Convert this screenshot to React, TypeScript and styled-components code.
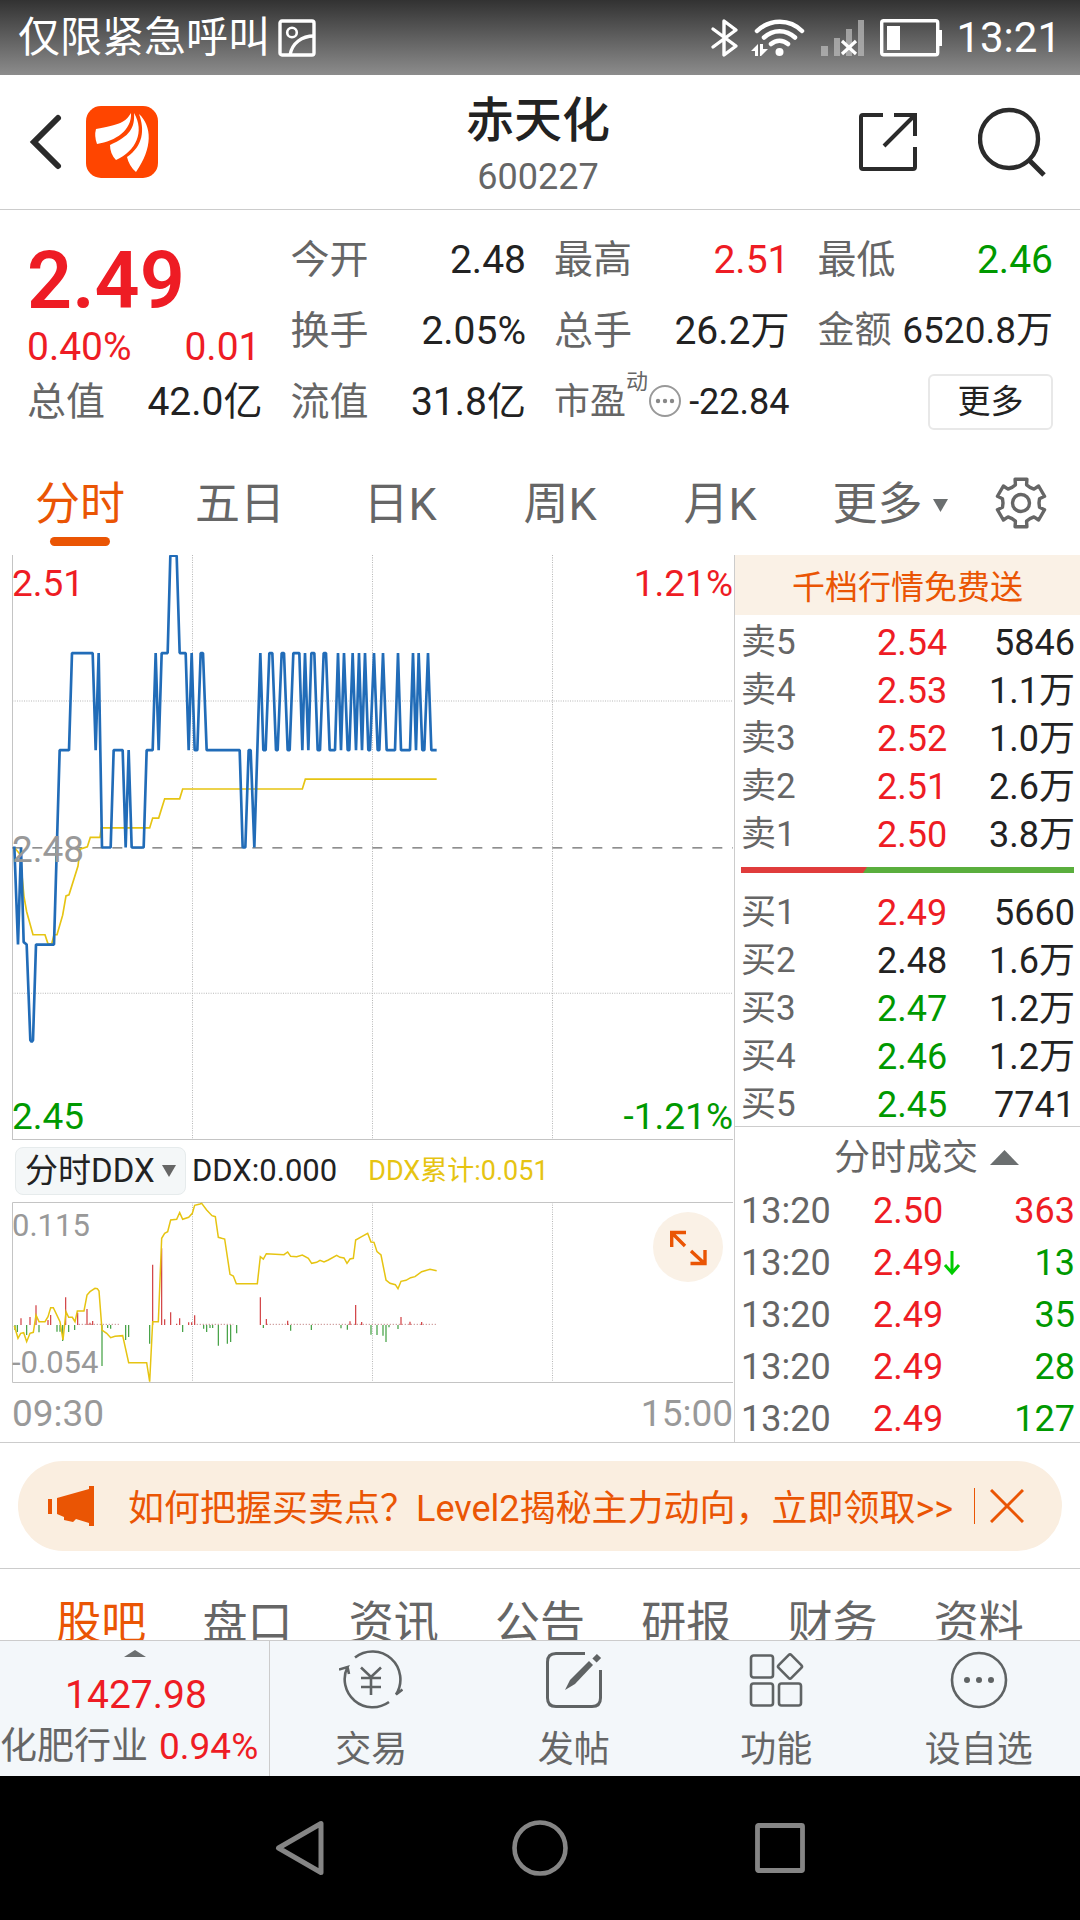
import React from 'react';
import styled, { createGlobalStyle, css } from 'styled-components';

const color = {
  ink: '#222222',
  label: '#666666',
  muted: '#999999',
  red: '#ee1c24',
  green: '#009900',
  orange: '#ea5504',
  yellow: '#e6c412',
  line: '#cccccc',
  cream: '#faf1e6',
  bar: '#f3f7fa',
};

type Tone = 'red' | 'green' | 'ink' | 'label' | 'muted';

const GlobalStyle = createGlobalStyle`
  *, *::before, *::after { box-sizing: border-box; }
  body {
    margin: 0;
    background: #ffffff;
    color: ${color.ink};
    font-family: Roboto, 'Noto Sans CJK SC', sans-serif;
  }
`;

const bareButton = css`
  margin: 0;
  padding: 0;
  border: 0;
  background: none;
  color: inherit;
  font: inherit;
  cursor: pointer;
`;

const Screen = styled.div`
  display: flex;
  flex-direction: column;
  height: 100vh;
  overflow: hidden;
`;

/* ---------- status bar ---------- */

const StatusBar = styled.div`
  display: flex;
  flex: none;
  align-items: center;
  justify-content: space-between;
  height: 75px;
  padding: 0 19px 0 18px;
  background: linear-gradient(#323232, #8c8c8c);
  color: #ffffff;
  font-size: 42px;
  line-height: 60px;
`;

const StatusGroup = styled.div<{ $gap: number }>`
  display: flex;
  align-items: center;
  gap: ${(p) => p.$gap}px;
`;

/* ---------- header ---------- */

const Header = styled.header`
  display: grid;
  flex: none;
  grid-template-columns: 1fr auto 1fr;
  align-items: center;
  height: 135px;
  padding: 0 32px 0 28px;
  border-bottom: 1px solid ${color.line};
`;

const HeaderSide = styled.div<{ $end?: boolean }>`
  display: flex;
  align-items: center;
  justify-content: ${(p) => (p.$end ? 'flex-end' : 'flex-start')};
  gap: ${(p) => (p.$end ? 60 : 22)}px;
`;

const IconButton = styled.button`
  ${bareButton}
  display: flex;
  align-items: center;
  justify-content: center;
`;

const HeaderTitle = styled.div`
  display: flex;
  flex-direction: column;
  align-items: center;
  padding-top: 5px;
`;

const StockName = styled.h1`
  margin: 0;
  font-size: 48px;
  font-weight: 500;
  line-height: 64px;
`;

const StockCode = styled.span`
  color: ${color.label};
  font-size: 36px;
  line-height: 48px;
`;

/* ---------- quote ---------- */

const Content = styled.main`
  flex: 1;
  min-height: 0;
  overflow: hidden;
`;

const QuoteGrid = styled.section`
  display: grid;
  grid-template-columns: repeat(4, 1fr);
  grid-auto-rows: 71px;
  column-gap: 28px;
  padding: 14px 27px 38px;
`;

const PriceBlock = styled.div`
  grid-row: span 2;
  padding-top: 12px;
  color: ${color.red};
`;

const BigPrice = styled.div`
  font-size: 79px;
  font-weight: 600;
  line-height: 90px;
`;

const PriceChange = styled.div`
  display: flex;
  justify-content: space-between;
  padding-right: 2px;
  font-size: 39px;
  line-height: 42px;
`;

const Stat = styled.div<{ $size?: number }>`
  display: flex;
  align-items: center;
  justify-content: space-between;
  font-size: ${(p) => p.$size ?? 39}px;
  line-height: 48px;
  white-space: nowrap;
`;

const StatLabel = styled.span`
  display: flex;
  align-items: center;
  color: ${color.label};
`;

const Value = styled.span<{ $tone?: Tone }>`
  color: ${(p) => color[p.$tone ?? 'ink']};
`;

const Superscript = styled.span`
  align-self: flex-start;
  margin-top: -8px;
  font-size: 22px;
  line-height: 24px;
`;

const MoreButton = styled.button`
  ${bareButton}
  align-self: center;
  justify-self: end;
  width: 125px;
  height: 56px;
  border: 2px solid #e8e8e8;
  border-radius: 6px;
  font-size: 33px;
  line-height: 48px;
`;

/* ---------- period tabs ---------- */

const PeriodTabs = styled.nav`
  display: grid;
  grid-template-columns: repeat(5, 160fr) 180fr 100fr;
  height: 80px;
`;

const PeriodTab = styled.button<{ $active?: boolean }>`
  ${bareButton}
  display: flex;
  flex-direction: column;
  align-items: center;
  color: ${(p) => (p.$active ? color.orange : color.label)};
  font-size: 45px;
  line-height: 60px;

  &::after {
    width: 60px;
    height: 9px;
    margin-top: 2px;
    border-radius: 5px;
    background: ${(p) => (p.$active ? color.orange : 'transparent')};
    content: '';
  }
`;

const MoreTab = styled.button`
  ${bareButton}
  display: flex;
  align-items: center;
  justify-content: center;
  gap: 10px;
  height: 60px;
  color: ${color.label};
  font-size: 45px;
  line-height: 60px;
`;

const SettingsTab = styled(IconButton)`
  height: 56px;
  padding-right: 18px;
`;

/* ---------- charts ---------- */

const Market = styled.section`
  display: grid;
  grid-template-columns: 735fr 345fr;
  border-bottom: 1px solid ${color.line};
`;

const ChartColumn = styled.div`
  padding-left: 12px;
  border-right: 1px solid ${color.line};
`;

const ChartFrame = styled.div`
  position: relative;
`;

const ChartSvg = styled.svg<{ $ratio: string }>`
  display: block;
  width: 100%;
  aspect-ratio: ${(p) => p.$ratio};
`;

const ChartLabel = styled.span<{
  $tone: Tone;
  $top?: string;
  $bottom?: string;
  $right?: boolean;
  $small?: boolean;
}>`
  position: absolute;
  top: ${(p) => p.$top ?? 'auto'};
  bottom: ${(p) => p.$bottom ?? 'auto'};
  ${(p) => (p.$right ? 'right: 1px;' : 'left: 0;')}
  color: ${(p) => color[p.$tone]};
  font-size: ${(p) => (p.$small ? 31 : 37)}px;
  line-height: 40px;
`;

const IndicatorRow = styled.div`
  display: flex;
  align-items: center;
  height: 62px;
  padding-left: 3px;
  font-size: 31px;
  line-height: 48px;
`;

const SelectBox = styled.div`
  position: relative;
  display: flex;
  align-items: center;
`;

const IndicatorSelect = styled.select`
  width: 171px;
  height: 48px;
  padding: 0 0 0 9px;
  border: 1px solid #e6ebec;
  border-radius: 8px;
  background: #f4f7f8;
  color: ${color.ink};
  font: inherit;
  font-size: 33px;
  line-height: 46px;
  appearance: none;
`;

const SelectArrow = styled.svg`
  position: absolute;
  right: 10px;
  pointer-events: none;
`;

const DdxValue = styled.span`
  margin-left: 6px;
`;

const DdxTotal = styled.span`
  margin-left: 31px;
  color: ${color.yellow};
  font-size: 27px;
`;

const ExpandButton = styled.button`
  ${bareButton}
  position: absolute;
  top: 10px;
  right: 11px;
  width: 70px;
  height: 70px;
  border-radius: 50%;
  background: ${color.cream};
`;

const TimeAxis = styled.div`
  display: flex;
  justify-content: space-between;
  align-items: center;
  height: 59px;
  padding: 3px 1px 0 0;
  color: ${color.muted};
  font-size: 37px;
  line-height: 40px;
`;

/* ---------- order book ---------- */

const PromoLink = styled.a`
  display: block;
  height: 60px;
  background: ${color.cream};
  color: ${color.orange};
  font-size: 33px;
  line-height: 66px;
  text-align: center;
  text-decoration: none;
`;

const DataTable = styled.table<{ $top?: number }>`
  display: block;
  padding: ${(p) => p.$top ?? 0}px 5px 0 6px;
  font-size: 36px;
`;

const Rows = styled.tbody`
  display: flex;
  flex-direction: column;
  gap: 6px;
`;

const Row = styled.tr<{ $trade?: boolean }>`
  display: grid;
  grid-template-columns: ${(p) => (p.$trade ? 132 : 136)}px 1fr auto;
  align-items: center;
  height: ${(p) => (p.$trade ? 46 : 42)}px;
  line-height: 42px;
`;

const Cell = styled.td<{ $tone?: Tone }>`
  display: flex;
  align-items: center;
  padding: 0;
  color: ${(p) => color[p.$tone ?? 'ink']};
`;

const RowHead = styled.th`
  padding: 0;
  color: ${color.label};
  font-size: 35px;
  font-weight: 400;
  text-align: left;
`;

const TimeHead = styled(RowHead)`
  font-size: 36px;
`;

const Balance = styled.svg`
  display: block;
  width: calc(100% - 12px);
  height: 6px;
  margin: 11px 6px 19px;
`;

const TradesToggle = styled.button`
  ${bareButton}
  display: flex;
  align-items: center;
  justify-content: center;
  gap: 12px;
  width: 100%;
  height: 62px;
  padding-left: 38px;
  border-top: 1px solid ${color.line};
  color: ${color.label};
  font-size: 36px;
  line-height: 48px;
`;

/* ---------- banner and lower tabs ---------- */

const BannerWrap = styled.section`
  padding: 18px 18px 17px;
  border-bottom: 1px solid ${color.line};
`;

const Banner = styled.div`
  display: flex;
  align-items: center;
  height: 90px;
  padding: 0 38px 0 30px;
  border-radius: 45px;
  background: #faeee0;
  color: ${color.orange};
`;

const BannerLink = styled.a`
  flex: 1;
  margin-left: 34px;
  padding-top: 6px;
  color: inherit;
  font-size: 36px;
  line-height: 48px;
  text-decoration: none;
  white-space: nowrap;
`;

const BannerClose = styled(IconButton)`
  height: 36px;
  padding-left: 15px;
  border-left: 1px solid ${color.orange};
`;

const InfoTabs = styled.nav`
  display: grid;
  grid-template-columns: repeat(7, 1fr);
  padding: 22px 28px;
`;

const InfoTab = styled.button<{ $active?: boolean }>`
  ${bareButton}
  color: ${(p) => (p.$active ? color.orange : color.label)};
  font-size: 45px;
  line-height: 66px;
`;

/* ---------- bottom bar ---------- */

const BottomBar = styled.footer`
  display: grid;
  flex: none;
  grid-template-columns: 1fr 3fr;
  height: 136px;
  border-top: 1px solid ${color.line};
  background: ${color.bar};
`;

const IndexCard = styled.button`
  ${bareButton}
  display: flex;
  flex-direction: column;
  align-items: center;
  padding-top: 9px;
  border-right: 1px solid ${color.line};
  white-space: nowrap;
`;

const IndexValue = styled.span`
  margin-top: 10px;
  padding-left: 3px;
  color: ${color.red};
  font-size: 39px;
  line-height: 56px;
`;

const IndexName = styled.span`
  display: flex;
  align-self: flex-start;
  gap: 11px;
  color: ${color.label};
  font-size: 37px;
  line-height: 48px;
`;

const Actions = styled.div`
  display: grid;
  grid-template-columns: repeat(4, 1fr);
`;

const Action = styled.button`
  ${bareButton}
  display: flex;
  flex-direction: column;
  align-items: center;
  gap: 16px;
  padding-top: 9px;
  color: ${color.label};
  font-size: 36px;
  line-height: 48px;
`;

const SystemNav = styled.nav`
  display: flex;
  flex: none;
  align-items: center;
  justify-content: center;
  gap: 180px;
  height: 144px;
  background: #000000;
`;

const SystemButton = styled(IconButton)`
  width: 60px;
  height: 60px;
`;

/* ---------- icons ---------- */

const PictureIcon = () => (
  <svg width="38" height="38" viewBox="0 0 38 38" fill="none" stroke="#fff" strokeWidth="3.4">
    <rect x="2" y="2" width="34" height="34" rx="2" />
    <circle cx="14" cy="13.500" r="4.800" strokeWidth="2.600" />
    <path d="M12 36C14 24 24 17 36 17" />
  </svg>
);

const BluetoothIcon = () => (
  <svg width="30" height="40" viewBox="0 0 30 40" fill="none" stroke="#fff" strokeWidth="3.4" strokeLinejoin="round" strokeLinecap="round">
    <path d="M3 11L26 28L14 37V3L26 12L3 29" />
  </svg>
);

const WifiIcon = () => (
  <svg width="56" height="40" viewBox="0 0 56 40" fill="none" stroke="#fff" strokeWidth="4.500" strokeLinecap="round">
    <path d="M7 13C20 .5 40 .5 52 13M14 19.500C23 11 36 11 45 19.500M21 26C26 21.500 33 21.500 38 26" />
    <circle cx="29.500" cy="34" r="4" fill="#fff" stroke="none" />
    <path d="M1 33L8 26V38H5V33ZM10 26H13V31H18L11 38H10Z" fill="#fff" stroke="none" />
  </svg>
);

const SignalIcon = () => (
  <svg width="46" height="40" viewBox="0 0 46 40">
    <g fill="#b9b9b9" opacity=".75">
      <rect x="1" y="28" width="7" height="10" />
      <rect x="14" y="20" width="6" height="18" />
      <rect x="26" y="11" width="6" height="27" />
      <rect x="38" y="2" width="6" height="36" />
    </g>
    <path d="M22 23L36 36M36 23L22 36" stroke="#fff" strokeWidth="3.200" />
  </svg>
);

const BatteryIcon = () => (
  <svg width="62" height="38" viewBox="0 0 62 38">
    <rect x="1.700" y="1.700" width="56" height="34" rx="2" fill="none" stroke="#fff" strokeWidth="3.400" />
    <rect x="7" y="7" width="13" height="24" fill="#fff" />
    <rect x="58" y="11" width="4" height="16" fill="#fff" />
  </svg>
);

const BackIcon = () => (
  <svg width="36" height="60" viewBox="0 0 36 60" fill="none" stroke="#2b2b2b" strokeWidth="6" strokeLinecap="round">
    <path d="M30 6L6 30L30 54" />
  </svg>
);

const Logo = () => (
  <svg width="72" height="72" viewBox="0 0 72 72">
    <rect width="72" height="72" rx="15" fill="#ff4500" />
    <g fill="#fff">
      <path d="M45 7C40 16 33 19 10 23Q8 30 11 38C30 35 46 24 45 7Z" />
      <path d="M48 7C49 22 44 30 24 39Q24 48 30 54C50 45 59 26 48 7Z" />
      <path d="M53 8C66 20 67 42 50 66Q43 60 41 51C57 40 59 24 53 8Z" />
    </g>
  </svg>
);

const ShareIcon = () => (
  <svg width="60" height="60" viewBox="0 0 60 60" fill="none" stroke="#2b2b2b" strokeWidth="4">
    <path d="M25 3H5Q3 3 3 5V55Q3 57 5 57H55Q57 57 57 55V35" />
    <path d="M36 3H57V24M57 3L26 34" />
  </svg>
);

const SearchIcon = () => (
  <svg width="70" height="70" viewBox="0 0 70 70" fill="none" stroke="#2b2b2b" strokeWidth="4.400">
    <circle cx="31" cy="32" r="29" />
    <path d="M51 53L66 68" strokeWidth="5" />
  </svg>
);

const InfoIcon = () => (
  <svg width="34" height="34" viewBox="0 0 34 34">
    <circle cx="17" cy="16" r="15" fill="none" stroke="#999" strokeWidth="2" />
    {[10, 17, 24].map((x) => (
      <circle key={x} cx={x} cy="16" r="2.200" fill="#888" />
    ))}
  </svg>
);

const polar = (radius: number, degrees: number) => {
  const a = (degrees * Math.PI) / 180;
  return `${(26 + radius * Math.cos(a)).toFixed(2)},${(26 + radius * Math.sin(a)).toFixed(2)}`;
};

const gearPoints = Array.from({ length: 6 }, (_, k) => {
  const a = -90 + k * 60;
  return [polar(19, a - 17), polar(24.5, a - 14), polar(24.5, a + 14), polar(19, a + 17), polar(18, a + 30)].join(' ');
}).join(' ');

const GearIcon = () => (
  <svg width="52" height="52" viewBox="0 0 52 52" fill="none" stroke="#666" strokeWidth="3.400" strokeLinejoin="round">
    <polygon points={gearPoints} />
    <circle cx="26" cy="26" r="8.500" />
  </svg>
);

const Triangle = ({ up, w, h }: { up?: boolean; w: number; h: number }) => (
  <svg width={w} height={h} viewBox="0 0 10 10" preserveAspectRatio="none" fill="#6b6f70">
    <path d={up ? 'M0 10L5 0L10 10Z' : 'M0 0H10L5 10Z'} />
  </svg>
);

const DownArrow = () => (
  <svg width="18" height="26" viewBox="0 0 18 26" fill="none" stroke="#00cc00" strokeWidth="3">
    <path d="M9 1V22M2 15L9 23L16 15" />
  </svg>
);

const MegaphoneIcon = () => (
  <svg width="46" height="40" viewBox="0 0 46 40" fill={color.orange}>
    <path d="M0 13H4V28H0ZM9 12L41 3V0H46V40H41V37L28 33L25 36L16 34V31L9 28Z" />
  </svg>
);

const CloseIcon = () => (
  <svg width="34" height="34" viewBox="0 0 34 34" stroke={color.orange} strokeWidth="3">
    <path d="M1 1L33 33M33 1L1 33" />
  </svg>
);

const ExpandIcon = () => (
  <svg width="70" height="70" viewBox="0 0 70 70" fill="none" stroke={color.orange} strokeWidth="3.400">
    <path d="M33 20.500H18.700V35M19 21L32 34M52 38V51.500H37.500M51.500 51.500L38 39" />
  </svg>
);

const TradeIcon = () => (
  <svg width="64" height="60" viewBox="0 0 64 60" fill="none" stroke="#5f6364" strokeWidth="2.600">
    <path d="M16 7.500A28 28 0 0 1 57 44.500L63.500 39.500M50 52A28 28 0 0 1 8.500 17L0 19.500M8.500 17L10 24" />
    <path d="M22 17.500L32 27L42 17.500M32 27V45M22 28H42M22 37H42" />
  </svg>
);

const PostIcon = () => (
  <svg width="60" height="60" viewBox="-2 -2 60 60" fill="none" stroke="#5f6364" strokeWidth="3">
    <path d="M39 1.500H10Q1.500 1.500 1.500 10V46Q1.500 54.500 10 54.500H46Q54.500 54.500 54.500 46V18" />
    <path d="M19 38L24 28L43 9L47 13L29 32Z" fill="#5f6364" stroke="none" />
    <path d="M48.500 8.500L53 4" strokeWidth="6" />
  </svg>
);

const FeaturesIcon = () => (
  <svg width="60" height="60" viewBox="-4 -4 60 60" fill="none" stroke="#5f6364" strokeWidth="2.600">
    <rect x="1" y="1.500" width="22" height="22" rx="2.500" />
    <rect x="1" y="29.500" width="22" height="22" rx="2.500" />
    <rect x="29" y="29.500" width="22" height="22" rx="2.500" />
    <rect x="31" y="3.500" width="18" height="18" rx="2" transform="rotate(45 40 12.500)" />
  </svg>
);

const DotsIcon = () => (
  <svg width="60" height="60" viewBox="0 0 60 60" fill="none" stroke="#5f6364" strokeWidth="2.600">
    <circle cx="30" cy="30" r="27" />
    {[18, 30, 42].map((x) => (
      <circle key={x} cx={x} cy="30" r="3" fill="#5f6364" stroke="none" />
    ))}
  </svg>
);

/* ---------- data ---------- */

type Level = { name: string; price: string; tone: Tone; volume: string };

const asks: Level[] = [
  { name: '卖5', price: '2.54', tone: 'red', volume: '5846' },
  { name: '卖4', price: '2.53', tone: 'red', volume: '1.1万' },
  { name: '卖3', price: '2.52', tone: 'red', volume: '1.0万' },
  { name: '卖2', price: '2.51', tone: 'red', volume: '2.6万' },
  { name: '卖1', price: '2.50', tone: 'red', volume: '3.8万' },
];

const bids: Level[] = [
  { name: '买1', price: '2.49', tone: 'red', volume: '5660' },
  { name: '买2', price: '2.48', tone: 'ink', volume: '1.6万' },
  { name: '买3', price: '2.47', tone: 'green', volume: '1.2万' },
  { name: '买4', price: '2.46', tone: 'green', volume: '1.2万' },
  { name: '买5', price: '2.45', tone: 'green', volume: '7741' },
];

const trades: { price: string; down?: boolean; volume: string; tone: Tone }[] = [
  { price: '2.50', volume: '363', tone: 'red' },
  { price: '2.49', down: true, volume: '13', tone: 'green' },
  { price: '2.49', volume: '35', tone: 'green' },
  { price: '2.49', volume: '28', tone: 'green' },
  { price: '2.49', volume: '127', tone: 'green' },
];

const priceLine =
  '43,907 54,1197 63,910 71,1190 80,1197 91,1480 95,1485 99,1480 108,1197 162,1197 179,622 207,622 216,335 278,335 287,622 296,335 306,910 332,910 341,622 368,622 377,910 386,622 395,910 431,910 440,622 458,622 467,335 476,622 485,335 503,335 511,47 530,47 539,335 557,335 566,622 575,335 584,622 592,622 602,335 609,335 620,622 719,622 728,910 736,910 746,622 752,622 763,910 781,335 790,622 797,622 808,335 817,335 828,622 833,622 845,335 852,335 863,622 869,622 880,335 898,335 907,622 915,335 925,622 934,335 943,335 953,622 960,622 971,335 978,335 989,622 1005,622 1014,335 1023,622 1032,335 1043,622 1048,622 1058,335 1068,622 1077,335 1086,622 1095,335 1105,622 1110,622 1122,335 1133,622 1138,622 1149,335 1160,622 1185,622 1194,335 1203,622 1230,622 1239,335 1248,622 1256,335 1267,622 1273,622 1284,335 1294,622 1310,622';

const averageLine =
  '43,910 60,930 72,1055 80,1100 99,1168 135,1168 144,1195 155,1195 162,1168 171,1168 188,1110 198,1053 207,1050 234,965 240,915 262,908 271,880 300,880 304,852 449,852 458,823 476,823 494,766 539,766 548,737 907,737 916,708 1310,708';

const ddxLine =
  '43,617 54,655 62,640 71,638 80,665 90,640 100,637 108,585 117,605 135,605 144,590 152,563 160,563 180,605 189,660 198,575 206,592 217,592 225,605 232,573 252,573 261,525 270,515 285,505 292,506 297,513 306,630 320,640 332,653 345,649 368,647 386,728 440,728 449,785 458,605 475,605 485,355 494,340 503,335 512,300 530,298 539,278 548,298 566,292 577,280 584,256 600,252 605,250 620,270 636,287 646,290 655,352 665,355 674,357 690,463 700,468 709,491 772,491 781,410 790,417 799,401 852,404 863,396 872,409 890,410 907,405 925,415 935,430 950,427 960,421 972,426 985,420 1010,406 1020,412 1032,414 1041,430 1050,417 1060,415 1067,360 1085,350 1103,340 1113,366 1122,367 1131,395 1143,405 1158,480 1170,490 1186,494 1194,506 1203,484 1218,481 1232,473 1245,470 1265,455 1290,448 1310,452';

const inflow = [
  [63, 595], [90, 591], [108, 556], [144, 600], [152, 585], [197, 532], [233, 578], [261, 567], [270, 608], [278, 603],
  [458, 434], [485, 385], [494, 598], [512, 577], [530, 611], [539, 595], [566, 607], [575, 607], [584, 586], [781, 532],
  [799, 597], [863, 602], [1050, 604], [1067, 555], [1085, 606], [1203, 591], [1230, 605], [1265, 606],
];

const outflow = [
  [45, 630], [52, 636], [80, 645], [117, 637], [171, 635], [180, 635], [188, 663], [206, 636], [224, 630], [306, 738],
  [323, 624], [332, 626], [377, 660], [386, 651], [449, 671], [548, 636], [611, 626], [620, 636], [630, 624], [638, 624],
  [655, 677], [682, 671], [692, 666], [710, 640], [790, 624], [872, 632], [934, 630], [1023, 625], [1042, 629],
  [1113, 644], [1131, 645], [1149, 647], [1158, 666], [1167, 622], [1194, 627],
];

const barPath = (bars: number[][]) => bars.map(([x, y]) => `M${x} 615V${y}`).join('');

/* ---------- parts ---------- */

const PriceChart = () => (
  <ChartFrame>
    <ChartSvg $ratio="722 / 585" viewBox="36 45 2166 1730" preserveAspectRatio="none" role="img" aria-label="分时走势">
      <g fill="none">
        <path d="M577.500 45V1772M1117.500 45V1772M1657.500 45V1772M37 477H2199M37 1341H2199" stroke="#b8b8b8" strokeWidth="3" strokeDasharray="3 4" />
        <path d="M37.500 45V1775M36 1773.500H2199" stroke="#c4c4c4" strokeWidth="3" />
        <path d="M37 911H2199" stroke="#6a6a6a" strokeWidth="4" strokeDasharray="30 30" />
        <polyline points={averageLine} stroke={color.yellow} strokeWidth="5" />
        <polyline points={priceLine} stroke="#216cb8" strokeWidth="8" strokeLinejoin="bevel" />
      </g>
    </ChartSvg>
    <ChartLabel $tone="red" $top="9px">2.51</ChartLabel>
    <ChartLabel $tone="red" $top="9px" $right>1.21%</ChartLabel>
    <ChartLabel $tone="muted" $top="calc(50% - 18px)">2.48</ChartLabel>
    <ChartLabel $tone="green" $bottom="3px">2.45</ChartLabel>
    <ChartLabel $tone="green" $bottom="3px" $right>-1.21%</ChartLabel>
  </ChartFrame>
);

const DdxChart = () => (
  <ChartFrame>
    <ChartSvg $ratio="722 / 181" viewBox="36 246 2166 543" role="img" aria-label="分时DDX">
      <g fill="none">
        <path d="M577.500 247V787M1117.500 247V787M1657.500 247V787" stroke="#b8b8b8" strokeWidth="3" strokeDasharray="3 4" />
        <path d="M2199 247.500H37.500V787.500H2199" stroke="#c4c4c4" strokeWidth="3" />
        <path d="M236 613H360M590 613H700M800 613H1310" stroke="#c99090" strokeWidth="3" strokeDasharray="4 5" />
        <path d={barPath(inflow)} stroke="#d0393c" strokeWidth="3.500" />
        <path d={barPath(outflow)} stroke="#3a9c3a" strokeWidth="3.500" />
        <polyline points={ddxLine} stroke={color.yellow} strokeWidth="4.500" />
      </g>
    </ChartSvg>
    <ChartLabel $tone="muted" $top="4px" $small>0.115</ChartLabel>
    <ChartLabel $tone="muted" $bottom="0" $small>-0.054</ChartLabel>
    <ExpandButton aria-label="展开">
      <ExpandIcon />
    </ExpandButton>
  </ChartFrame>
);

const Depth = ({ levels, top }: { levels: Level[]; top?: number }) => (
  <DataTable $top={top}>
    <Rows>
      {levels.map((l) => (
        <Row key={l.name}>
          <RowHead scope="row">{l.name}</RowHead>
          <Cell $tone={l.tone}>{l.price}</Cell>
          <Cell>{l.volume}</Cell>
        </Row>
      ))}
    </Rows>
  </DataTable>
);

const StatItem = ({ label, value, tone, size }: { label: string; value: string; tone?: Tone; size?: number }) => (
  <Stat $size={size}>
    <StatLabel>{label}</StatLabel>
    <Value $tone={tone}>{value}</Value>
  </Stat>
);

export default function App() {
  return (
    <Screen>
      <GlobalStyle />
      <StatusBar>
        <StatusGroup $gap={8}>
          <span>仅限紧急呼叫</span>
          <PictureIcon />
        </StatusGroup>
        <StatusGroup $gap={14}>
          <StatusGroup $gap={10}>
            <BluetoothIcon />
            <WifiIcon />
          </StatusGroup>
          <SignalIcon />
          <BatteryIcon />
          <span>13:21</span>
        </StatusGroup>
      </StatusBar>

      <Header>
        <HeaderSide>
          <IconButton aria-label="返回">
            <BackIcon />
          </IconButton>
          <Logo />
        </HeaderSide>
        <HeaderTitle>
          <StockName>赤天化</StockName>
          <StockCode>600227</StockCode>
        </HeaderTitle>
        <HeaderSide $end>
          <IconButton aria-label="分享">
            <ShareIcon />
          </IconButton>
          <IconButton aria-label="搜索">
            <SearchIcon />
          </IconButton>
        </HeaderSide>
      </Header>

      <Content>
        <QuoteGrid>
          <PriceBlock>
            <BigPrice>2.49</BigPrice>
            <PriceChange>
              <span>0.40%</span>
              <span>0.01</span>
            </PriceChange>
          </PriceBlock>
          <StatItem label="今开" value="2.48" />
          <StatItem label="最高" value="2.51" tone="red" />
          <StatItem label="最低" value="2.46" tone="green" />
          <StatItem label="换手" value="2.05%" />
          <StatItem label="总手" value="26.2万" />
          <StatItem label="金额" value="6520.8万" size={37} />
          <StatItem label="总值" value="42.0亿" />
          <StatItem label="流值" value="31.8亿" />
          <Stat $size={36}>
            <StatLabel>
              市盈
              <Superscript>动</Superscript>
              <InfoIcon />
            </StatLabel>
            <Value>-22.84</Value>
          </Stat>
          <MoreButton>更多</MoreButton>
        </QuoteGrid>

        <PeriodTabs>
          <PeriodTab $active>分时</PeriodTab>
          {['五日', '日K', '周K', '月K'].map((t) => (
            <PeriodTab key={t}>{t}</PeriodTab>
          ))}
          <MoreTab aria-haspopup="menu">
            更多
            <Triangle w={15} h={13} />
          </MoreTab>
          <SettingsTab aria-label="设置">
            <GearIcon />
          </SettingsTab>
        </PeriodTabs>

        <Market>
          <ChartColumn>
            <PriceChart />
            <IndicatorRow>
              <SelectBox>
                <IndicatorSelect aria-label="指标" defaultValue="ddx">
                  <option value="ddx">分时DDX</option>
                </IndicatorSelect>
                <SelectArrow width="14" height="12" viewBox="0 0 14 12" fill="#666">
                  <path d="M0 0H14L7 12Z" />
                </SelectArrow>
              </SelectBox>
              <DdxValue>DDX:0.000</DdxValue>
              <DdxTotal>DDX累计:0.051</DdxTotal>
            </IndicatorRow>
            <DdxChart />
            <TimeAxis>
              <span>09:30</span>
              <span>15:00</span>
            </TimeAxis>
          </ChartColumn>

          <div>
            <PromoLink href="#level">千档行情免费送</PromoLink>
            <Depth levels={asks} top={7} />
            <Balance viewBox="0 0 333 6" preserveAspectRatio="none">
              <path d="M0 0H333V6H0Z" fill="#5aae3d" />
              <path d="M0 0H126L122 6H0Z" fill="#e03c3c" />
            </Balance>
            <Depth levels={bids} />
            <TradesToggle>
              分时成交
              <Triangle up w={29} h={15} />
            </TradesToggle>
            <DataTable>
              <Rows>
                {trades.map((t, i) => (
                  <Row key={i} $trade>
                    <TimeHead scope="row">13:20</TimeHead>
                    <Cell $tone="red">
                      {t.price}
                      {t.down && <DownArrow />}
                    </Cell>
                    <Cell $tone={t.tone}>{t.volume}</Cell>
                  </Row>
                ))}
              </Rows>
            </DataTable>
          </div>
        </Market>

        <BannerWrap>
          <Banner>
            <MegaphoneIcon />
            <BannerLink href="#level2">如何把握买卖点？Level2揭秘主力动向，立即领取&gt;&gt;</BannerLink>
            <BannerClose aria-label="关闭">
              <CloseIcon />
            </BannerClose>
          </Banner>
        </BannerWrap>

        <InfoTabs>
          {['股吧', '盘口', '资讯', '公告', '研报', '财务', '资料'].map((t, i) => (
            <InfoTab key={t} $active={i === 0}>
              {t}
            </InfoTab>
          ))}
        </InfoTabs>
      </Content>

      <BottomBar>
        <IndexCard>
          <Triangle up w={22} h={7} />
          <IndexValue>1427.98</IndexValue>
          <IndexName>
            化肥行业
            <Value $tone="red">0.94%</Value>
          </IndexName>
        </IndexCard>
        <Actions>
          <Action>
            <TradeIcon />
            交易
          </Action>
          <Action>
            <PostIcon />
            发帖
          </Action>
          <Action>
            <FeaturesIcon />
            功能
          </Action>
          <Action>
            <DotsIcon />
            设自选
          </Action>
        </Actions>
      </BottomBar>

      <SystemNav>
        <SystemButton aria-label="后退">
          <svg width="60" height="60" viewBox="0 0 60 60" fill="none" stroke="#858585" strokeWidth="5" strokeLinejoin="round">
            <path d="M51 5.500V54.500L8.500 30Z" />
          </svg>
        </SystemButton>
        <SystemButton aria-label="主页">
          <svg width="60" height="60" viewBox="0 0 60 60" fill="none" stroke="#858585" strokeWidth="4.600">
            <circle cx="30" cy="30" r="25.500" />
          </svg>
        </SystemButton>
        <SystemButton aria-label="任务">
          <svg width="60" height="60" viewBox="0 0 60 60" fill="none" stroke="#858585" strokeWidth="4.800" strokeLinejoin="round">
            <rect x="7.500" y="7.500" width="45" height="45" rx="1" />
          </svg>
        </SystemButton>
      </SystemNav>
    </Screen>
  );
}
